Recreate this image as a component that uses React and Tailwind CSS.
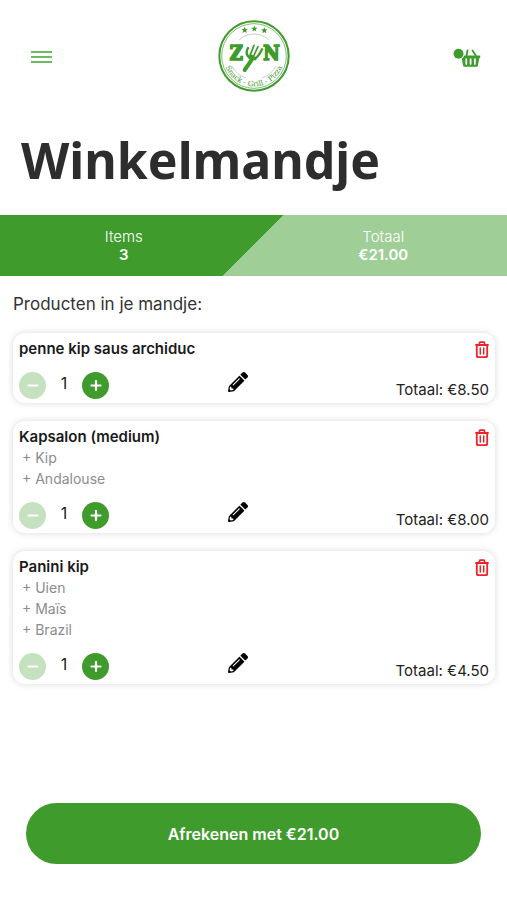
import { FaPencilAlt } from "react-icons/fa";

const items = [
  { name: "penne kip saus archiduc", options: [], price: "8.50" },
  { name: "Kapsalon (medium)", options: ["Kip", "Andalouse"], price: "8.00" },
  { name: "Panini kip", options: ["Uien", "Maïs", "Brazil"], price: "4.50" },
];

function Star({ x, y }) {
  return (
    <path
      transform={`translate(${x} ${y}) scale(1.2)`}
      d="M0-8 2.3-2.6 8-2.2 3.6 1.5 5 7.2 0 4.1-5 7.2-3.6 1.5-8-2.2-2.3-2.6Z"
      fill="#3f9b2c"
    />
  );
}

function Logo() {
  return (
    <svg viewBox="0 0 216 216" className="size-18" role="img" aria-label="Zyn Snack Grill Pizza">
      <circle cx="108" cy="108" r="104" fill="none" stroke="#3f9b2c" strokeWidth="6" />
      <circle cx="108" cy="108" r="97" fill="none" stroke="#3f9b2c" strokeWidth="2" />
      <Star x={80} y={30} />
      <Star x={109} y={26} />
      <Star x={139} y={31} />
      <path d="M64 59a66 66 0 0 1 88 0" fill="none" stroke="#a9bba6" strokeWidth="2" />
      <path d="M42 138a72 72 0 0 0 42 36M174 138a72 72 0 0 1-42 36" fill="none" stroke="#a9bba6" strokeWidth="2" />
      <g
        fill="#3f9b2c"
        stroke="#3f9b2c"
        strokeWidth="5"
        fontFamily="'DejaVu Serif Condensed', 'DejaVu Serif', serif"
        fontWeight="700"
        fontSize="60"
      >
        <text x="35" y="121">Z</text>
        <text x="136" y="121">N</text>
      </g>
      {/* fork standing in for the Y */}
      <g fill="none" stroke="#3f9b2c" strokeLinecap="round" strokeLinejoin="round">
        <path d="M80 150 102 118" strokeWidth="12" />
        <path d="M90 84c-7 12-4 24 8 32 14 5 24-6 34-28" strokeWidth="7" />
        <path d="M108 76 97 104M120 80 106 110" strokeWidth="5" />
        <path d="M98 108 111 116" strokeWidth="10" />
      </g>
      <path id="logo-arc" d="M17 108a91 91 0 0 0 182 0" fill="none" />
      <text fill="#3f9b2c" fontFamily="'DejaVu Serif', serif" fontSize="22">
        <textPath href="#logo-arc" startOffset="50%" textAnchor="middle">
          Snack - Grill - Pizza
        </textPath>
      </text>
    </svg>
  );
}

function BasketIcon() {
  return (
    <svg viewBox="0 0 28 20" className="h-5 w-7">
      <g fill="none" stroke="#3f9b2c" strokeWidth="1.8" strokeLinecap="round">
        <path d="M14.5 2.5 13.5 8M19.5 2.5 23 8" />
      </g>
      <path d="M8 7.5h19.2v2.6h-.9l-1.4 7.4c-.1.8-.7 1.3-1.5 1.3H11.6c-.8 0-1.4-.5-1.5-1.3L8.7 10.1H8Z" fill="#3f9b2c" />
      <path d="M13.3 11v5M17.6 11v5M21.9 11v5" stroke="white" strokeWidth="1.7" strokeLinecap="round" />
      <circle cx="5.5" cy="5.8" r="6" fill="white" />
      <circle cx="5.5" cy="5.8" r="5" fill="#3f9b2c" />
    </svg>
  );
}

function TrashIcon() {
  return (
    <svg viewBox="0 0 14 17" className="h-[17px] w-[14px]" fill="none" stroke="#ec2429" strokeWidth="1.8" strokeLinejoin="round" strokeLinecap="round">
      <path d="M1 4h12M4 3.8 4.9 1.2h4.2L10 3.8M1.8 4.2v10.2c0 1.1.6 1.7 1.6 1.7h7.2c1 0 1.6-.6 1.6-1.7V4.2" />
      <path d="M5.3 7v6M8.7 7v6" strokeWidth="1.5" />
    </svg>
  );
}

function RoundButton({ label, disabled, children }) {
  return (
    <button
      type="button"
      aria-label={label}
      disabled={disabled}
      className="flex size-[27px] items-center justify-center rounded-full bg-[#3f9b2c] disabled:bg-[#c5e1c0]"
    >
      <svg viewBox="0 0 12 12" className="size-3" stroke="white" strokeWidth="2.2" strokeLinecap="round">
        {children}
      </svg>
    </button>
  );
}

function CartItem({ name, options, price }) {
  return (
    <li className="rounded-xl bg-white px-1.5 pt-1.5 pb-1 shadow-[0_0_7px_rgba(0,0,0,0.15)]">
      <div className="flex h-5 items-center justify-between">
        <h2 className="text-[15px] font-semibold text-[#1a1a1a]">{name}</h2>
        <button type="button" aria-label={`Verwijder ${name}`}>
          <TrashIcon />
        </button>
      </div>
      <ul className="pl-[3px] text-sm leading-[21px] text-[#8c8c8c]">
        {options.map((option) => (
          <li key={option}>+ {option}</li>
        ))}
      </ul>
      <div className="mt-[13px] grid grid-cols-[4fr_5fr]">
        <div className="flex items-center gap-3.5">
          <RoundButton label="Minder" disabled>
            <path d="M1.5 5.5h9" />
          </RoundButton>
          <span className="w-2 pb-1.5 text-center text-base leading-5 text-[#222]">1</span>
          <RoundButton label="Meer">
            <path d="M1.5 5.5h9M6 1v9" />
          </RoundButton>
        </div>
        <div className="flex justify-between">
          <button type="button" aria-label={`Bewerk ${name}`} className="self-start">
            <FaPencilAlt size={20} />
          </button>
          <span className="self-end text-[15px] leading-[18px] text-[#222]">Totaal: €{price}</span>
        </div>
      </div>
    </li>
  );
}

export default function App() {
  return (
    <div className="flex min-h-screen flex-col bg-white font-['Inter',sans-serif]">
      <header className="grid grid-cols-[1fr_auto_1fr] items-center px-[26px] pt-5">
        <button type="button" aria-label="Menu" className="justify-self-start px-[5px] pt-0.5">
          <svg viewBox="0 0 21 14" className="h-[14px] w-[21px]" stroke="#6fb964" strokeWidth="2">
            <path d="M0 2h21M0 7h21M0 12h21" />
          </svg>
        </button>
        <a href="#">
          <Logo />
        </a>
        <button type="button" aria-label="Winkelmandje" className="justify-self-end pt-1">
          <BasketIcon />
        </button>
      </header>

      <h1 className="mt-8 pl-[21px] font-['Noto_Sans',sans-serif] text-[50px] leading-[73px] font-bold text-[#2d2d2d]">
        Winkelmandje
      </h1>

      <dl className="mt-[18px] grid h-[61px] grid-cols-2 content-center gap-3 bg-[linear-gradient(135deg,#3f9b2c_50%,#a0ce97_50%)] text-center text-[15px] leading-[18px] text-white">
        <div>
          <dt className="font-light">Items</dt>
          <dd className="font-semibold">3</dd>
        </div>
        <div>
          <dt className="font-light">Totaal</dt>
          <dd className="font-semibold">€21.00</dd>
        </div>
      </dl>

      <main className="pt-4 pr-3 pl-[13px]">
        <p className="text-[17px] leading-6 text-[#333]">Producten in je mandje:</p>
        <ul className="mt-[17px] flex flex-col gap-[18px]">
          {items.map((item) => (
            <CartItem key={item.name} {...item} />
          ))}
        </ul>
      </main>

      <footer className="mt-auto px-[26px] pt-6 pb-9">
        <button type="button" className="h-[61px] w-full rounded-full bg-[#3f9b2c] text-base font-semibold text-white">
          Afrekenen met €21.00
        </button>
      </footer>
    </div>
  );
}
